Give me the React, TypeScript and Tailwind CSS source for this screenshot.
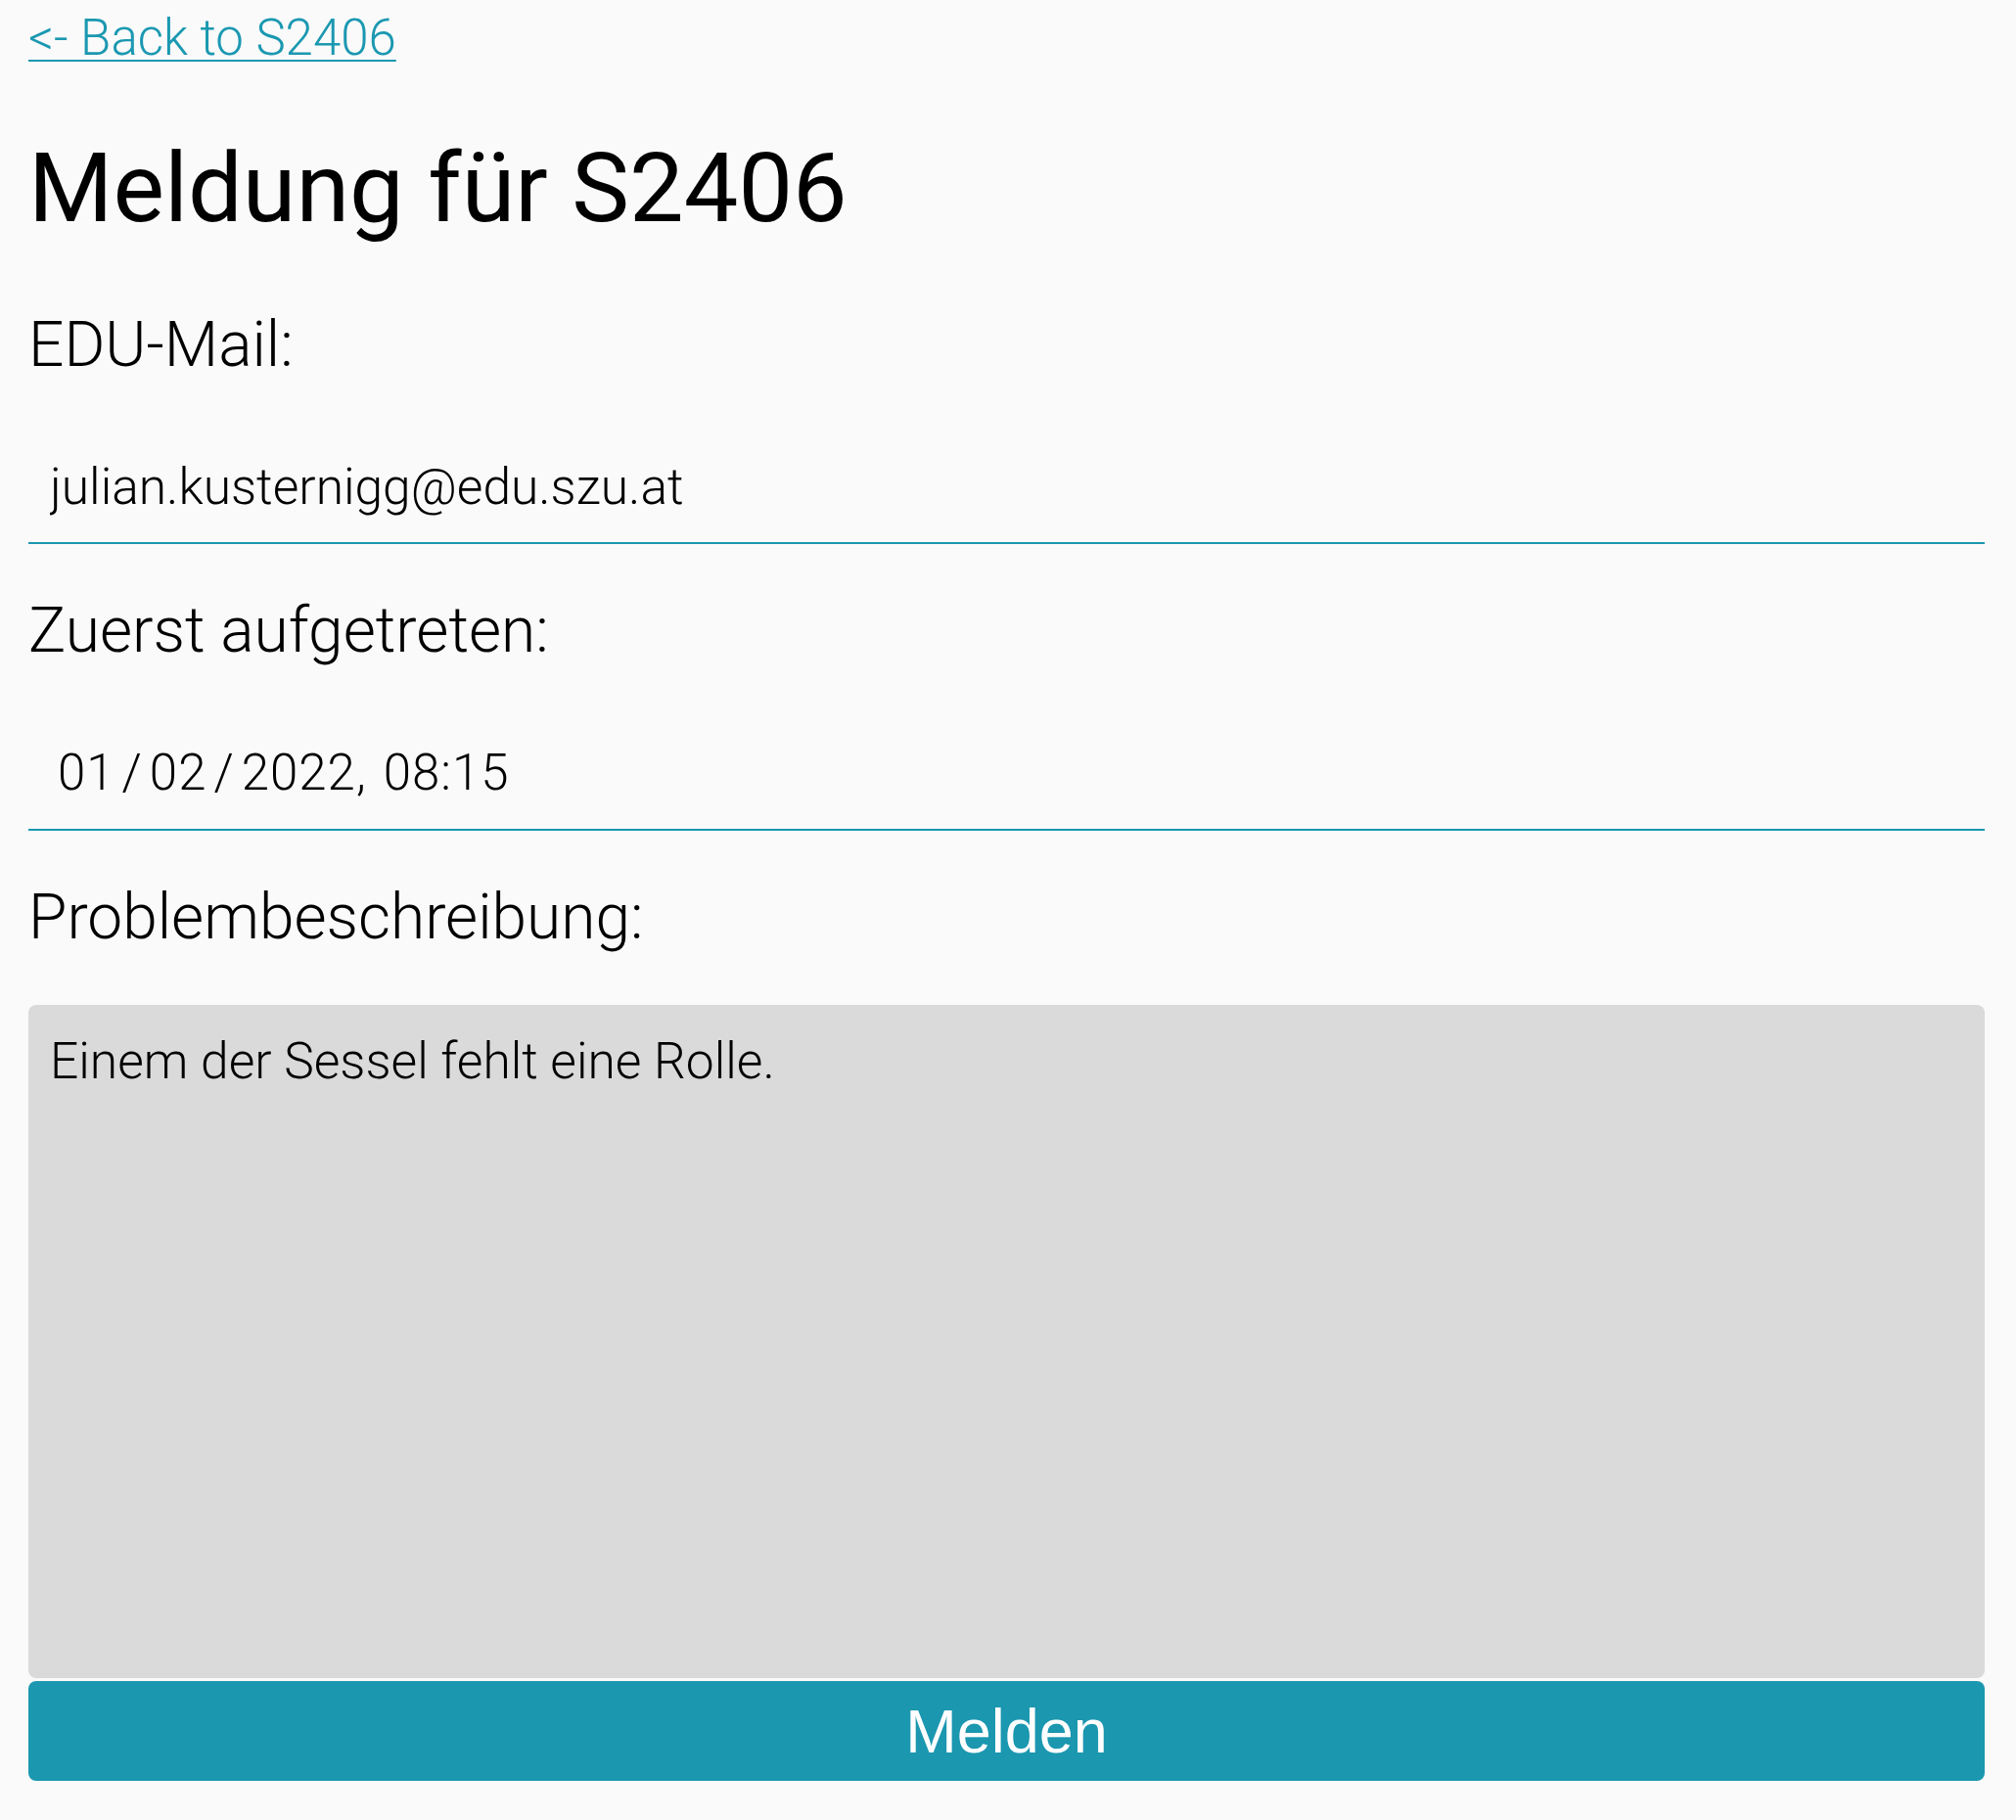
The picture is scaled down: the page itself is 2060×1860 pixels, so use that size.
export default function App() {
  return (
    <div className="min-h-screen bg-[#fafafa] pl-[29px] pr-[32px] pt-[13px] font-['Roboto',sans-serif] text-black">
      <a
        href="#"
        className="block w-fit text-[51px] font-light leading-none text-[#1b98b1] underline decoration-[2px] underline-offset-[5px]"
      >
        {"<- Back to S2406"}
      </a>

      <h1 className="mt-[79px] text-[99px] font-normal leading-none">Meldung für S2406</h1>

      <label className="mt-[79px] block text-[64px] font-light leading-none">EDU-Mail:</label>
      <input
        type="email"
        readOnly
        value="julian.kusternigg@edu.szu.at"
        className="mt-[56px] block h-[115px] w-full border-b-2 border-[#1b97b0] bg-transparent pl-[22px] text-[51.5px] font-light leading-none outline-none"
      />

      <label className="mt-[57px] block text-[64px] font-light leading-none">Zuerst aufgetreten:</label>
      <div className="mt-[55px] flex h-[117px] items-center border-b-2 border-[#1b97b0] pl-[30px] text-[51px] font-light leading-none tracking-[1px]">
        <span>01</span>
        <span className="mx-[7px]">/</span>
        <span>02</span>
        <span className="mx-[7px]">/</span>
        <span>2022</span>
        <span>,</span>
        <span className="ml-[17px]">08:15</span>
      </div>

      <label className="mt-[57px] block text-[64px] font-light leading-none">Problembeschreibung:</label>
      <textarea
        readOnly
        value="Einem der Sessel fehlt eine Rolle."
        className="mt-[57px] block h-[688px] w-full resize-none rounded-[8px] bg-[#dadada] pl-[22px] pt-[27px] text-[51.5px] font-light leading-[1.2] outline-none"
      />

      <button className="mt-[3px] flex h-[102px] w-full items-center justify-center rounded-[8px] bg-[#1b97b0] font-['Liberation_Sans',Arial,sans-serif] text-[63px] leading-none text-white">
        Melden
      </button>
    </div>
  );
}
